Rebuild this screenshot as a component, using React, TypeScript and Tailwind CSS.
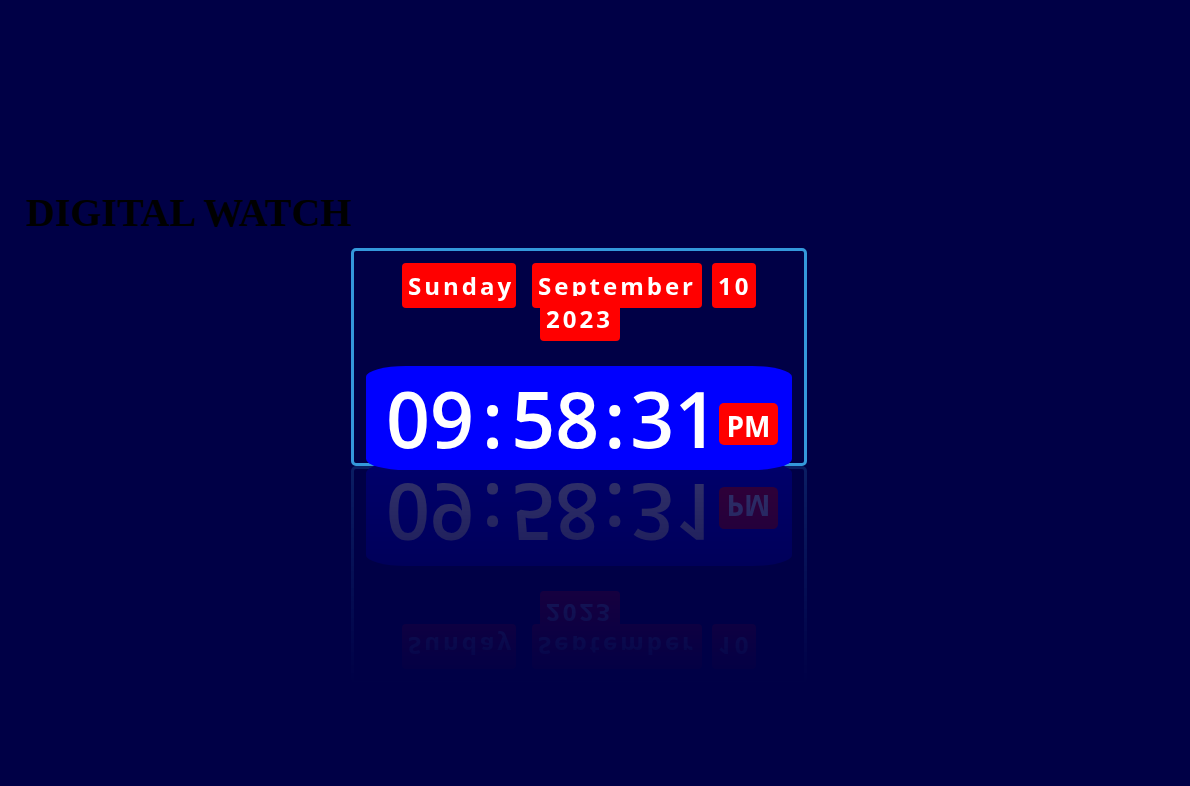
export default function App() {
  const badge =
    'flex h-[45px] items-center rounded-[4px] bg-[#ff0000] pl-[6px] text-[24px] font-bold leading-[45px] tracking-[3px] text-white';

  return (
    <div className="flex min-h-screen w-full items-start bg-[#000046]">
      <h1 className="ml-[26px] mt-[191px] w-[325px] shrink-0 whitespace-nowrap font-['Liberation_Serif',serif] text-[40px] font-bold leading-[44px] text-black">
        DIGITAL WATCH
      </h1>

      <div className="mt-[248px] h-[218px] w-[456px] shrink-0 rounded-[5px] border-[3px] border-[#3498db] pt-[12px] font-['Open_Sans','Noto_Sans',sans-serif] [-webkit-box-reflect:below_0px_linear-gradient(transparent,rgba(0,0,0,0.2))]">
        <div className="flex flex-col items-center">
          <div className="flex">
            <span className={`${badge} w-[114px]`}>Sunday</span>
            <span className={`${badge} ml-[16px] w-[170px]`}>September</span>
            <span className={`${badge} ml-[10px] w-[44px]`}>10</span>
          </div>
          <div className="-mt-[12px] flex">
            <span className={`${badge} ml-[2px] w-[80px] pl-[5px]`}>2023</span>
          </div>
        </div>

        <div className="mx-[12px] mt-[25px] flex h-[104px] items-center rounded-[40px/11px] bg-[#0000ff] pl-[20px] text-white">
          <span className="text-[77px] font-semibold leading-none">09</span>
          <span className="mx-[8px] text-[77px] font-semibold leading-none">:</span>
          <span className="text-[77px] font-semibold leading-none">58</span>
          <span className="mx-[5px] text-[77px] font-semibold leading-none">:</span>
          <span className="text-[77px] font-semibold leading-none">31</span>
          <span className="mb-[25px] ml-auto mr-[14px] flex h-[42px] w-[59px] shrink-0 items-center self-end justify-center rounded-[5px] bg-[#ff0000] pt-[4px] text-[28px] font-bold leading-none">
            PM
          </span>
        </div>
      </div>
    </div>
  );
}
